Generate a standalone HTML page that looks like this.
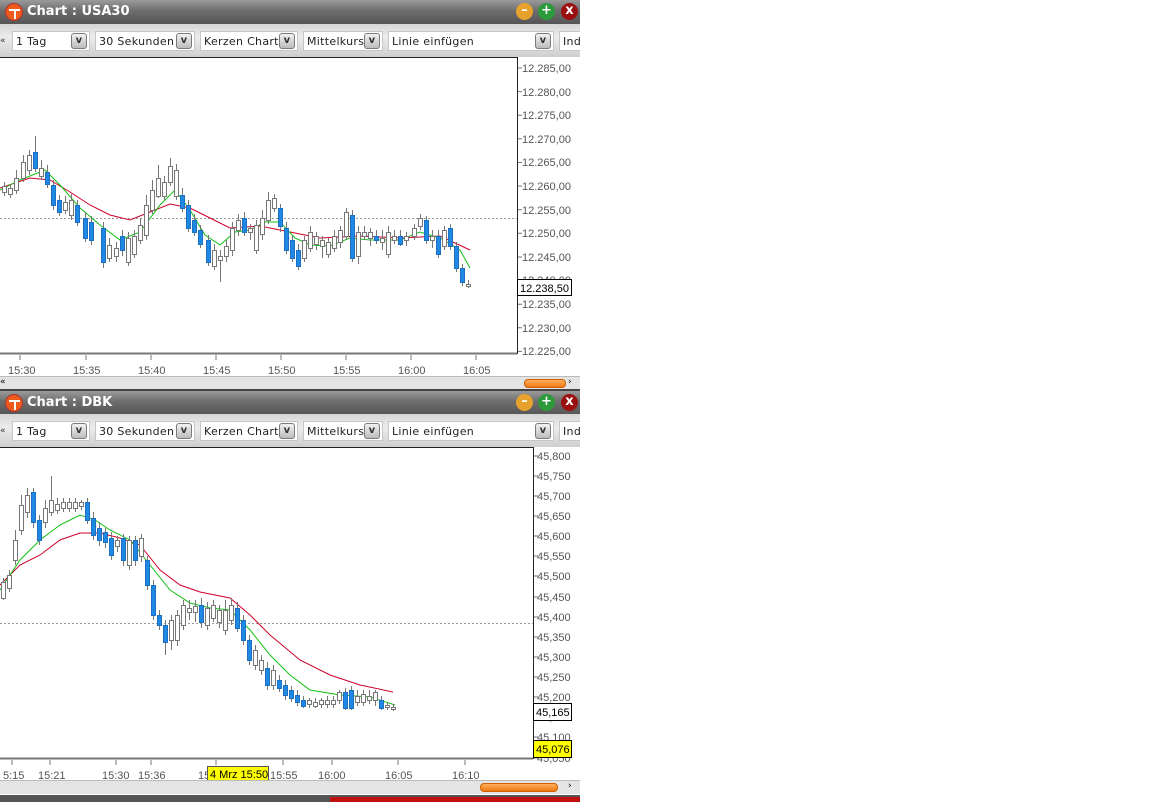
<!DOCTYPE html>
<html><head><meta charset="utf-8"><style>
*{margin:0;padding:0;box-sizing:border-box}
body{width:1152px;height:802px;background:#fff;position:relative;overflow:hidden;font-family:"DejaVu Sans","Liberation Sans",sans-serif}
.title{position:absolute;left:0;width:580px;height:24px;background:linear-gradient(#9a9a9a,#6d6d6d 45%,#555 100%);color:#fff;font-weight:bold;font-size:13px}
.title span{position:absolute;left:27px;top:4px}
.logo{position:absolute;left:5px;top:3px;width:18px;height:18px;border-radius:50%;background:#ee5a1c;border:1px solid #a33}
.logo:before{content:"";position:absolute;left:3px;top:5px;width:11px;height:2px;background:#fff}
.logo:after{content:"";position:absolute;left:8px;top:5px;width:2px;height:10px;background:#fff}
.btn{position:absolute;top:3px;width:17px;height:17px;border-radius:50%;color:#fff;font-size:13px;font-weight:bold;text-align:center;line-height:16px}
.tb{position:absolute;left:0;width:580px;height:33px;background:linear-gradient(#d6d6d6,#ececec 40%,#cfcfcf);overflow:hidden}
.sel{position:absolute;top:7px;height:20px;background:#fff;border:1px solid #c6c6c6;font-size:11px;padding:3px 0 0 3px;color:#222;letter-spacing:.3px}
.sel i{position:absolute;right:2px;top:1px;width:16px;height:16px;border:1px solid #7a7a7a;border-radius:3px;background:linear-gradient(#f2f2f2,#bcbcbc);font-style:normal;font-size:10px;font-weight:bold;text-align:center;line-height:14px;color:#333}
.sb{position:absolute;left:0;width:580px;height:14px;background:#e4e4e4;border-top:1px solid #bbb}
.or{position:absolute;height:9px;border-radius:4px;background:linear-gradient(#ffb060,#f07810);border:1px solid #d06000}
</style></head><body>

<div class="title" style="top:0"><div class="logo"></div><span>Chart : USA30</span>
<div class="btn" style="left:516px;background:#e6a22c">–</div><div class="btn" style="left:538px;background:#2c9a3a">+</div><div class="btn" style="left:561px;background:#9a1010">x</div></div>
<div class="tb" style="top:24px">
<div style="position:absolute;left:0;top:12px;font-size:9px;color:#333">«</div>
<div class="sel" style="left:12px;width:78px">1 Tag<i>v</i></div>
<div class="sel" style="left:95px;width:100px">30 Sekunden<i>v</i></div>
<div class="sel" style="left:200px;width:98px">Kerzen Chart<i>v</i></div>
<div class="sel" style="left:303px;width:80px">Mittelkurs<i>v</i></div>
<div class="sel" style="left:388px;width:166px">Linie einfügen<i>v</i></div>
<div class="sel" style="left:559px;width:30px">Ind</div>
</div>
<div class="sb" style="top:376px"><div style="position:absolute;left:0;top:0;font-size:9px">«</div><div class="or" style="left:524px;top:2px;width:42px"></div><div style="position:absolute;left:568px;top:0;font-size:9px">›</div></div>

<div style="position:absolute;left:0;top:389px;width:580px;height:3px;background:#444"></div>
<div class="title" style="top:391px"><div class="logo"></div><span>Chart : DBK</span>
<div class="btn" style="left:516px;background:#e6a22c">–</div><div class="btn" style="left:538px;background:#2c9a3a">+</div><div class="btn" style="left:561px;background:#9a1010">x</div></div>
<div class="tb" style="top:414px">
<div style="position:absolute;left:0;top:12px;font-size:9px;color:#333">«</div>
<div class="sel" style="left:12px;width:78px">1 Tag<i>v</i></div>
<div class="sel" style="left:95px;width:100px">30 Sekunden<i>v</i></div>
<div class="sel" style="left:200px;width:98px">Kerzen Chart<i>v</i></div>
<div class="sel" style="left:303px;width:80px">Mittelkurs<i>v</i></div>
<div class="sel" style="left:388px;width:166px">Linie einfügen<i>v</i></div>
<div class="sel" style="left:559px;width:30px">Ind</div>
</div>
<div class="sb" style="top:780px"><div class="or" style="left:480px;top:2px;width:78px"></div><div style="position:absolute;left:568px;top:0;font-size:9px">›</div></div>
<div style="position:absolute;left:0;top:795px;width:580px;height:7px;background:#555"></div>
<div style="position:absolute;left:330px;top:797px;width:250px;height:5px;background:#c01010"></div>

<svg width="580" height="780" style="position:absolute;left:0;top:0" font-family="Liberation Sans,sans-serif" font-size="11" fill="#555">
<rect x="0" y="57" width="580" height="319" fill="#fff"/>
<path d="M0 57.5H517.5V353.5H0" fill="none" stroke="#222"/>
<path d="M0 353.5H517" stroke="#777" stroke-width="2"/>
<line x1="0" y1="218.5" x2="517" y2="218.5" stroke="#999" stroke-dasharray="2,2"/>
<g stroke="#777">
<path d="M518 68h4M518 91.6h4M518 115.2h4M518 138.9h4M518 162.5h4M518 186h4M518 209.7h4M518 233.3h4M518 257h4M518 280.6h4M518 304.2h4M518 327.8h4M518 351.4h4"/>
<path d="M20 355v5M86 355v5M151 355v5M216 355v5M281 355v5M346 355v5M411 355v5M476 355v5"/>
</g>
<g>
<text x="522" y="72">12.285,00</text><text x="522" y="96">12.280,00</text><text x="522" y="119">12.275,00</text><text x="522" y="143">12.270,00</text><text x="522" y="166">12.265,00</text><text x="522" y="190">12.260,00</text><text x="522" y="214">12.255,00</text><text x="522" y="237">12.250,00</text><text x="522" y="261">12.245,00</text><text x="522" y="284">12.240,00</text><text x="522" y="308">12.235,00</text><text x="522" y="332">12.230,00</text><text x="522" y="355">12.225,00</text>
<text x="8" y="374">15:30</text><text x="73" y="374">15:35</text><text x="138" y="374">15:40</text><text x="203" y="374">15:45</text><text x="268" y="374">15:50</text><text x="333" y="374">15:55</text><text x="398" y="374">16:00</text><text x="463" y="374">16:05</text>
</g>
<rect x="517.5" y="279.5" width="54" height="16" fill="#fff" stroke="#000"/><text x="520" y="292" fill="#000">12.238,50</text>

<polyline fill="none" stroke="#d0002a" points="0,188 30,178 50,180 70,192 90,205 110,215 130,220 150,212 170,204 190,208 210,218 230,228 260,226 290,232 320,238 360,236 400,238 440,236 470,250"/>
<polyline fill="none" stroke="#10c010" points="0,190 20,180 45,170 60,185 80,208 100,225 120,240 140,232 160,205 175,190 190,210 205,235 220,245 235,232 250,230 265,222 280,222 295,238 310,245 330,246 350,238 370,240 400,240 420,232 440,238 460,250 470,268"/>

<g stroke="#777" stroke-width="1">
<path d="M4.5 182V196M10.5 184V198M16.5 170V194M23.5 155V182M29.5 150V175M35.5 136V172M41.5 160V180M47.5 165V188M53.5 180V210M59.5 195V216M65.5 196V214M71.5 194V220M77.5 200V226M85.5 212V242M91.5 216V245M103.5 222V268M109.5 238V262M116.5 242V262M122.5 230V256M128.5 232V266M134.5 230V258M140.5 218V244M146.5 195V240M152.5 180V214M158.5 165V198M164.5 176V200M170.5 158V186M176.5 164V200M182.5 188V212M188.5 200V232M194.5 214V236M200.5 225V248M208.5 235V266M214.5 244V270M220.5 250V282M226.5 240V262M232.5 222V256M238.5 214V236M244.5 212V236M250.5 224V240M256.5 220V254M262.5 210V240M268.5 192V224M274.5 194V212M280.5 204V232M286.5 222V254M292.5 236V262M298.5 244V270M304.5 236V262M310.5 226V252M316.5 232V250M322.5 236V258M328.5 238V258M334.5 230V252M340.5 226V248M346.5 208V240M352.5 210V262M358.5 226V264M364.5 226V240M370.5 228V246M376.5 230V244M382.5 230V250M388.5 226V258M394.5 230V244M400.5 230V246M406.5 232V246M414.5 224V240M420.5 214V230M426.5 216V244M432.5 230V248M438.5 230V258M444.5 226V250M450.5 224V250M456.5 242V272M462.5 264V286M468.5 280V288"/>
</g>
<g fill="#fff" stroke="#777">
<rect x="2.5" y="186.5" width="4" height="6"/><rect x="8.5" y="188.5" width="4" height="6"/><rect x="14.5" y="178.5" width="4" height="12"/><rect x="21.5" y="162.5" width="4" height="16"/><rect x="27.5" y="155.5" width="4" height="15"/><rect x="39.5" y="168.5" width="4" height="8"/><rect x="63.5" y="202.5" width="4" height="8"/><rect x="69.5" y="200.5" width="4" height="15"/><rect x="107.5" y="245.5" width="4" height="13"/><rect x="114.5" y="248.5" width="4" height="8"/><rect x="126.5" y="238.5" width="4" height="24"/><rect x="132.5" y="236.5" width="4" height="18"/><rect x="138.5" y="225.5" width="4" height="15"/><rect x="144.5" y="205.5" width="4" height="30"/><rect x="150.5" y="190.5" width="4" height="20"/><rect x="156.5" y="178.5" width="4" height="18"/><rect x="162.5" y="182.5" width="4" height="14"/><rect x="168.5" y="166.5" width="4" height="16"/><rect x="174.5" y="170.5" width="4" height="26"/><rect x="212.5" y="250.5" width="4" height="16"/><rect x="218.5" y="256.5" width="4" height="4"/><rect x="224.5" y="246.5" width="4" height="10"/><rect x="230.5" y="228.5" width="4" height="22"/><rect x="236.5" y="220.5" width="4" height="10"/><rect x="248.5" y="228.5" width="4" height="4"/><rect x="254.5" y="225.5" width="4" height="25"/><rect x="260.5" y="218.5" width="4" height="16"/><rect x="266.5" y="200.5" width="4" height="20"/><rect x="272.5" y="198.5" width="4" height="10"/><rect x="302.5" y="240.5" width="4" height="18"/><rect x="308.5" y="232.5" width="4" height="16"/><rect x="314.5" y="236.5" width="4" height="8"/><rect x="320.5" y="240.5" width="4" height="6"/><rect x="326.5" y="242.5" width="4" height="12"/><rect x="332.5" y="236.5" width="4" height="12"/><rect x="338.5" y="230.5" width="4" height="12"/><rect x="344.5" y="212.5" width="4" height="24"/><rect x="356.5" y="232.5" width="4" height="24"/><rect x="362.5" y="232.5" width="4" height="4"/><rect x="368.5" y="232.5" width="4" height="6"/><rect x="380.5" y="238.5" width="4" height="4"/><rect x="386.5" y="232.5" width="4" height="22"/><rect x="392.5" y="236.5" width="4" height="4"/><rect x="404.5" y="236.5" width="4" height="4"/><rect x="412.5" y="228.5" width="4" height="8"/><rect x="418.5" y="218.5" width="4" height="8"/><rect x="430.5" y="236.5" width="4" height="4"/><rect x="442.5" y="230.5" width="4" height="16"/><rect x="466.5" y="284.5" width="4" height="2"/>
</g>
<g fill="#1e88e5" stroke="#1e6fc0">
<rect x="33.5" y="152.5" width="4" height="16"/><rect x="45.5" y="172.5" width="4" height="12"/><rect x="51.5" y="185.5" width="4" height="20"/><rect x="57.5" y="200.5" width="4" height="12"/><rect x="75.5" y="205.5" width="4" height="17"/><rect x="83.5" y="218.5" width="4" height="20"/><rect x="89.5" y="222.5" width="4" height="18"/><rect x="101.5" y="228.5" width="4" height="34"/><rect x="120.5" y="236.5" width="4" height="14"/><rect x="180.5" y="195.5" width="4" height="13"/><rect x="186.5" y="205.5" width="4" height="23"/><rect x="192.5" y="220.5" width="4" height="12"/><rect x="198.5" y="230.5" width="4" height="14"/><rect x="206.5" y="240.5" width="4" height="22"/><rect x="242.5" y="218.5" width="4" height="14"/><rect x="278.5" y="208.5" width="4" height="18"/><rect x="284.5" y="228.5" width="4" height="22"/><rect x="290.5" y="240.5" width="4" height="18"/><rect x="296.5" y="250.5" width="4" height="16"/><rect x="350.5" y="215.5" width="4" height="43"/><rect x="374.5" y="236.5" width="4" height="4"/><rect x="398.5" y="236.5" width="4" height="8"/><rect x="424.5" y="220.5" width="4" height="20"/><rect x="436.5" y="236.5" width="4" height="18"/><rect x="448.5" y="228.5" width="4" height="18"/><rect x="454.5" y="246.5" width="4" height="22"/><rect x="460.5" y="268.5" width="4" height="14"/>
</g>

<rect x="0" y="447" width="580" height="333" fill="#fff"/>
<path d="M0 447.5H533.5V758.5H0" fill="none" stroke="#222"/>
<path d="M0 758.5H533" stroke="#777" stroke-width="2"/>
<line x1="0" y1="623.5" x2="533" y2="623.5" stroke="#999" stroke-dasharray="2,2"/>
<g stroke="#777">
<path d="M534 456h4M534 476h4M534 496h4M534 516h4M534 536h4M534 556h4M534 576h4M534 597h4M534 617h4M534 637h4M534 657h4M534 677h4M534 697h4M534 717h4M534 737h4M534 758h4"/>
<path d="M12 760v5M50 760v5M116 760v5M151 760v5M216 760v5M283 760v5M332 760v5M398 760v5M465 760v5"/>
</g>
<g>
<text x="537" y="460">45,800</text><text x="537" y="480">45,750</text><text x="537" y="500">45,700</text><text x="537" y="520">45,650</text><text x="537" y="540">45,600</text><text x="537" y="560">45,550</text><text x="537" y="580">45,500</text><text x="537" y="601">45,450</text><text x="537" y="621">45,400</text><text x="537" y="641">45,350</text><text x="537" y="661">45,300</text><text x="537" y="681">45,250</text><text x="537" y="701">45,200</text><text x="537" y="721">45,150</text><text x="537" y="741">45,100</text><text x="537" y="762">45,050</text>
<text x="3" y="779">5:15</text><text x="38" y="779">15:21</text><text x="102" y="779">15:30</text><text x="138" y="779">15:36</text><text x="198" y="779">15</text><text x="270" y="779">15:55</text><text x="318" y="779">16:00</text><text x="385" y="779">16:05</text><text x="452" y="779">16:10</text>
</g>
<rect x="207.5" y="766.5" width="61" height="15" fill="#ffff00" stroke="#555"/><text x="210" y="778" fill="#000">4 Mrz 15:50</text>
<rect x="533.5" y="703.5" width="38" height="17" fill="#fff" stroke="#000"/><text x="536" y="716" fill="#000">45,165</text>
<rect x="533.5" y="740.5" width="38" height="17" fill="#ffff00" stroke="#000"/><text x="536" y="753" fill="#000">45,076</text>

<polyline fill="none" stroke="#d0002a" points="0,585 20,565 40,555 60,540 80,533 100,533 120,538 140,545 160,570 180,585 200,592 230,598 250,615 270,635 300,660 330,675 360,685 393,692"/>
<polyline fill="none" stroke="#10c010" points="0,590 20,560 40,540 60,525 80,515 95,520 110,530 130,540 150,565 170,590 190,603 210,608 230,610 250,630 270,655 290,675 310,690 340,695 370,697 395,705"/>

<g stroke="#777">
<path d="M3.5 578V600M9.5 570V592M15.5 530V565M21.5 495V535M27.5 488V518M33.5 488V528M39.5 515V545M45.5 500V528M51.5 476V516M57.5 498V514M63.5 498V512M69.5 498V512M75.5 498V512M81.5 500V510M87.5 498V524M93.5 512V540M99.5 522V546M105.5 528V548M111.5 532V560M117.5 536V552M123.5 534V566M129.5 536V570M135.5 536V566M141.5 534V562M147.5 556V590M153.5 580V620M159.5 610V630M165.5 620V655M171.5 615V650M177.5 610V646M183.5 600V630M189.5 600V620M195.5 600V622M201.5 598V628M207.5 602V630M213.5 600V622M219.5 605V628M225.5 600V635M231.5 598V625M237.5 602V632M243.5 615V645M249.5 635V665M255.5 645V670M261.5 655V675M267.5 662V690M273.5 665V690M279.5 675V692M285.5 680V700M291.5 686V702M297.5 690V706M303.5 696V708M309.5 698V708M315.5 698V708M321.5 698V708M327.5 696V708M333.5 696V708M339.5 690V704M345.5 688V710M351.5 686V710M357.5 690V706M363.5 690V706M369.5 690V704M375.5 690V706M381.5 696V710M387.5 702V710M393.5 704V711"/>
</g>
<g fill="#fff" stroke="#777">
<rect x="1.5" y="582.5" width="4" height="16"/><rect x="7.5" y="575.5" width="4" height="13"/><rect x="13.5" y="540.5" width="4" height="20"/><rect x="19.5" y="505.5" width="4" height="25"/><rect x="25.5" y="495.5" width="4" height="17"/><rect x="43.5" y="508.5" width="4" height="14"/><rect x="49.5" y="500.5" width="4" height="12"/><rect x="55.5" y="504.5" width="4" height="6"/><rect x="61.5" y="502.5" width="4" height="6"/><rect x="67.5" y="502.5" width="4" height="6"/><rect x="73.5" y="502.5" width="4" height="6"/><rect x="79.5" y="502.5" width="4" height="4"/><rect x="115.5" y="540.5" width="4" height="6"/><rect x="127.5" y="540.5" width="4" height="25"/><rect x="139.5" y="538.5" width="4" height="18"/><rect x="169.5" y="620.5" width="4" height="20"/><rect x="175.5" y="615.5" width="4" height="25"/><rect x="181.5" y="605.5" width="4" height="20"/><rect x="187.5" y="608.5" width="4" height="4"/><rect x="193.5" y="606.5" width="4" height="6"/><rect x="205.5" y="608.5" width="4" height="17"/><rect x="211.5" y="605.5" width="4" height="13"/><rect x="217.5" y="610.5" width="4" height="12"/><rect x="223.5" y="610.5" width="4" height="20"/><rect x="229.5" y="605.5" width="4" height="15"/><rect x="253.5" y="650.5" width="4" height="15"/><rect x="259.5" y="660.5" width="4" height="10"/><rect x="271.5" y="670.5" width="4" height="15"/><rect x="307.5" y="700.5" width="4" height="4"/><rect x="313.5" y="702.5" width="4" height="4"/><rect x="319.5" y="700.5" width="4" height="4"/><rect x="325.5" y="700.5" width="4" height="4"/><rect x="331.5" y="700.5" width="4" height="4"/><rect x="337.5" y="692.5" width="4" height="8"/><rect x="355.5" y="696.5" width="4" height="6"/><rect x="361.5" y="694.5" width="4" height="8"/><rect x="367.5" y="696.5" width="4" height="4"/><rect x="373.5" y="692.5" width="4" height="8"/><rect x="385.5" y="705.5" width="4" height="2"/><rect x="391.5" y="707.5" width="4" height="2"/>
</g>
<g fill="#1e88e5" stroke="#1e6fc0">
<rect x="31.5" y="492.5" width="4" height="30"/><rect x="37.5" y="520.5" width="4" height="20"/><rect x="85.5" y="502.5" width="4" height="18"/><rect x="91.5" y="518.5" width="4" height="17"/><rect x="97.5" y="528.5" width="4" height="12"/><rect x="103.5" y="532.5" width="4" height="10"/><rect x="109.5" y="538.5" width="4" height="17"/><rect x="121.5" y="538.5" width="4" height="22"/><rect x="133.5" y="540.5" width="4" height="20"/><rect x="145.5" y="560.5" width="4" height="25"/><rect x="151.5" y="585.5" width="4" height="30"/><rect x="157.5" y="615.5" width="4" height="10"/><rect x="163.5" y="625.5" width="4" height="17"/><rect x="199.5" y="605.5" width="4" height="17"/><rect x="235.5" y="608.5" width="4" height="20"/><rect x="241.5" y="620.5" width="4" height="20"/><rect x="247.5" y="640.5" width="4" height="20"/><rect x="265.5" y="668.5" width="4" height="17"/><rect x="277.5" y="680.5" width="4" height="8"/><rect x="283.5" y="685.5" width="4" height="10"/><rect x="289.5" y="690.5" width="4" height="8"/><rect x="295.5" y="695.5" width="4" height="7"/><rect x="301.5" y="700.5" width="4" height="6"/><rect x="343.5" y="692.5" width="4" height="16"/><rect x="349.5" y="690.5" width="4" height="18"/><rect x="379.5" y="700.5" width="4" height="8"/>
</g>
</svg>
</body></html>
